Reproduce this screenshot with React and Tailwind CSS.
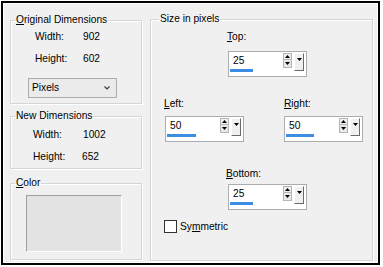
function Tri({ up }) {
  return (
    <svg width="5" height="3" viewBox="0 0 5 3" className="block">
      {up ? <path d="M2.5 0 L5 3 L0 3 Z" fill="#000" /> : <path d="M0 0 L5 0 L2.5 3 Z" fill="#000" />}
    </svg>
  );
}

function Spin({ value, barClass }) {
  return (
    <div className="flex h-[26px] w-[79px] items-start border border-[#abadb3] bg-white">
      <div className="flex w-[54px] flex-col">
        <span className="pl-[4px] pt-[3px] leading-[12px]">{value}</span>
        <span className={`ml-[1px] mt-[2px] h-[3px] bg-[#3c8de4] ${barClass}`} />
      </div>
      <div className="mt-[1px] flex w-[9px] flex-col">
        <div className="flex h-[7px] items-center justify-center border border-[#b5b5b5] bg-[#f0f0f0]">
          <Tri up />
        </div>
        <div className="flex h-[8px] items-center justify-center border border-t-0 border-[#b5b5b5] bg-[#e8e8e8]">
          <Tri />
        </div>
      </div>
      <div className="ml-[2px] mt-[1px] flex h-[18px] w-[10px] items-center justify-center border border-b-[#6a6a6a] border-l-white border-r-[#6a6a6a] border-t-white bg-[#f0f0f0] pb-[6px]">
        <Tri />
      </div>
    </div>
  );
}

function Row({ label, value, labelClass }) {
  return (
    <div className="flex leading-[12px]">
      <span className={labelClass}>{label}</span>
      <span>{value}</span>
    </div>
  );
}

const groupLine = "border border-[#d5d5d5] shadow-[inset_1px_1px_0_#ffffff,1px_1px_0_#ffffff]";

export default function App() {
  return (
    <div className="h-[267px] w-[383px] bg-white pl-[1px] pt-[1px] font-['Liberation_Sans',Arial,sans-serif] text-[10.2px] leading-[12px] text-black">
      <div className="h-[264px] w-[379px] border-2 border-black">
        <div className="flex h-full gap-[8px] border border-white bg-[#f0f0f0] pl-[6px] pt-[9px]">
          {/* left column */}
          <div className="flex w-[132px] flex-col pt-[1px]">
            <fieldset className={`h-[90px] ${groupLine}`}>
              <legend className="ml-[4px] px-[1px] leading-[12px]">
                <u>O</u>riginal Dimensions
              </legend>
              <div className="flex flex-col gap-[10px] pl-[24px] pt-[5px]">
                <Row label="Width:" value="902" labelClass="w-[48px]" />
                <Row label="Height:" value="602" labelClass="w-[48px]" />
              </div>
              <div className="ml-[17px] mt-[13px] flex h-[20px] w-[89px] items-center justify-between border border-[#acacac] bg-[#ebebeb] pl-[3px] pr-[6px]">
                <span>Pixels</span>
                <svg width="6" height="4" viewBox="0 0 6 4">
                  <path d="M0.5 0.5 L3 3 L5.5 0.5" stroke="#404040" strokeWidth="1.2" fill="none" />
                </svg>
              </div>
            </fieldset>

            <fieldset className={`mt-[6px] h-[59px] ${groupLine}`}>
              <legend className="ml-[4px] px-[1px] leading-[12px]">New Dimensions</legend>
              <div className="flex flex-col gap-[10px] pl-[22px] pt-[7px]">
                <Row label="Width:" value="1002" labelClass="w-[50px]" />
                <Row label="Height:" value="652" labelClass="w-[49px]" />
              </div>
            </fieldset>

            <fieldset className={`mt-[8px] h-[83px] ${groupLine}`}>
              <legend className="ml-[4px] px-[1px] leading-[12px]">
                <u>C</u>olor
              </legend>
              <div className="ml-[15px] mt-[6px] h-[57px] w-[96px] border border-b-white border-l-[#a0a0a0] border-r-white border-t-[#a0a0a0] bg-[#e3e3e3]" />
            </fieldset>
          </div>

          {/* right column */}
          <fieldset className={`h-[248px] w-[223px] ${groupLine}`}>
            <legend className="ml-[8px] px-[1px] leading-[12px]">Size in pixels</legend>

            <div className="ml-[76px] mt-[6px] flex flex-col">
              <span className="leading-[12px]">
                <u>T</u>op:
              </span>
              <div className="ml-[1px] mt-[8px]">
                <Spin value="25" barClass="w-[23px]" />
              </div>
            </div>

            <div className="ml-[13px] mt-[21px] flex">
              <div className="flex w-[120px] flex-col">
                <span className="leading-[12px]">
                  <u>L</u>eft:
                </span>
                <div className="ml-[1px] mt-[6px]">
                  <Spin value="50" barClass="w-[29px]" />
                </div>
              </div>
              <div className="flex flex-col">
                <span className="leading-[12px]">
                  <u>R</u>ight:
                </span>
                <div className="mt-[6px]">
                  <Spin value="50" barClass="w-[28px]" />
                </div>
              </div>
            </div>

            <div className="ml-[75px] mt-[26px] flex flex-col">
              <span className="leading-[12px]">
                <u>B</u>ottom:
              </span>
              <div className="ml-[2px] mt-[4px]">
                <Spin value="25" barClass="w-[23px]" />
              </div>
            </div>

            <div className="ml-[13px] mt-[10px] flex items-center gap-[3px]">
              <span className="h-[13px] w-[13px] border border-[#333333] bg-white" />
              <span className="leading-[12px]">
                Sy<u>m</u>metric
              </span>
            </div>
          </fieldset>
        </div>
      </div>
    </div>
  );
}
